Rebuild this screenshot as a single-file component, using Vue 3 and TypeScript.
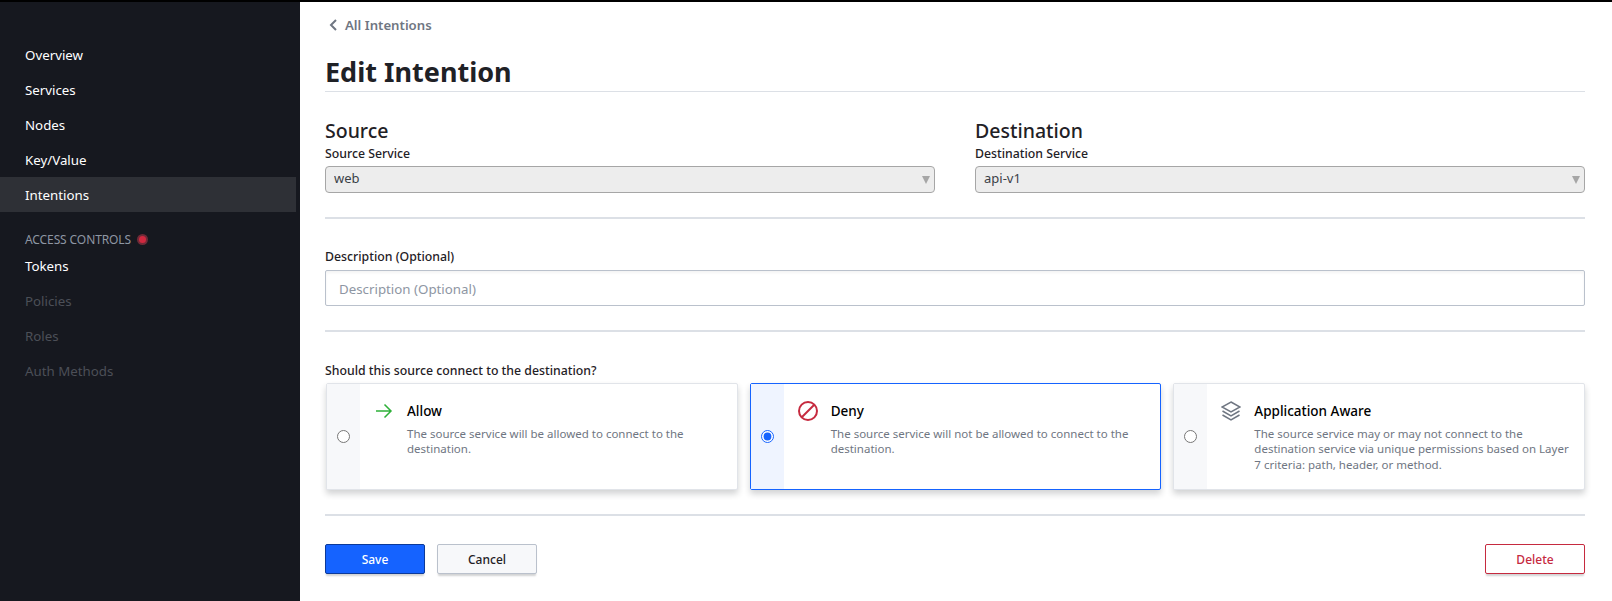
<script setup lang="ts">
const navTop = ["Overview", "Services", "Nodes", "Key/Value", "Intentions"];
const navAccess = [
  { label: "Tokens", off: false },
  { label: "Policies", off: true },
  { label: "Roles", off: true },
  { label: "Auth Methods", off: true },
];

const options = [
  {
    id: "allow",
    title: "Allow",
    text: "The source service will be allowed to connect to the destination.",
  },
  {
    id: "deny",
    title: "Deny",
    text: "The source service will not be allowed to connect to the destination.",
  },
  {
    id: "aware",
    title: "Application Aware",
    text: "The source service may or may not connect to the destination service via unique permissions based on Layer 7 criteria: path, header, or method.",
  },
];
</script>

<template>
  <div class="page">
    <nav class="side">
      <ul class="nav-list first">
        <li v-for="item in navTop" :key="item" :class="{ active: item === 'Intentions' }">{{ item }}</li>
      </ul>
      <div class="nav-title">ACCESS CONTROLS <span class="dot"></span></div>
      <ul class="nav-list">
        <li v-for="item in navAccess" :key="item.label" :class="{ off: item.off }">{{ item.label }}</li>
      </ul>
    </nav>

    <main class="main">
      <a class="crumb">
        <svg width="10" height="14" viewBox="0 0 10 14"><path d="M8 2 3 7l5 5" fill="none" stroke="#6f7682" stroke-width="2" /></svg>
        All Intentions
      </a>
      <h1>Edit Intention</h1>

      <section class="pair">
        <div>
          <h2>Source</h2>
          <label>Source Service</label>
          <div class="select">
            <select disabled><option>web</option></select>
            <span class="caret"></span>
          </div>
        </div>
        <div>
          <h2>Destination</h2>
          <label>Destination Service</label>
          <div class="select">
            <select disabled><option>api-v1</option></select>
            <span class="caret"></span>
          </div>
        </div>
      </section>

      <section class="desc">
        <label>Description (Optional)</label>
        <input type="text" placeholder="Description (Optional)" />
      </section>

      <section class="action">
        <label>Should this source connect to the destination?</label>
        <div class="cards">
          <div v-for="o in options" :key="o.id" class="card" :class="{ checked: o.id === 'deny' }">
            <div class="radio-col">
              <input type="radio" name="action" :checked="o.id === 'deny'" />
            </div>
            <div class="body">
              <div class="head">
                <svg v-if="o.id === 'allow'" width="20" height="20" viewBox="0 0 20 20">
                  <path d="M2 10h15M10.5 3.5 17 10l-6.500 6.500" fill="none" stroke="#2eb039" stroke-width="1.500" />
                </svg>
                <svg v-else-if="o.id === 'deny'" width="20" height="20" viewBox="0 0 20 20">
                  <circle cx="10" cy="10" r="9" fill="none" stroke="#c62a3f" stroke-width="2" />
                  <path d="M16 4 4 16" stroke="#c62a3f" stroke-width="2" />
                </svg>
                <svg v-else width="20" height="20" viewBox="0 0 20 20" fill="none" stroke="#6f7682" stroke-width="1.500">
                  <path d="M10 1 19 6l-9 5-9-5z" />
                  <path d="m1.500 10 8.500 4.800L18.500 10" />
                  <path d="m1.500 14 8.500 4.800L18.500 14" />
                </svg>
                <strong>{{ o.title }}</strong>
              </div>
              <p>{{ o.text }}</p>
            </div>
          </div>
        </div>
      </section>

      <footer class="buttons">
        <button class="btn save">Save</button>
        <button class="btn cancel">Cancel</button>
        <button class="btn delete">Delete</button>
      </footer>
    </main>
  </div>
</template>

<style>
html,
body {
  margin: 0;
  background: #fff;
}
</style>

<style scoped>
.page {
  display: flex;
  height: 599px;
  border-top: 2px solid #000;
  font-family: "Noto Sans", "Open Sans", sans-serif;
  overflow: hidden;
}

.side {
  width: 300px;
  flex: none;
  background: #16181f;
  padding-top: 35px;
  box-sizing: border-box;
}

.nav-list {
  list-style: none;
  margin: 0;
  padding: 0;
  font-size: 13.300px;
  color: #fff;
}

.nav-list li {
  height: 35px;
  line-height: 35px;
  padding-left: 25px;
}

.nav-list.first li {
  line-height: 37px;
}

.nav-list li.active {
  background: #2e3036;
  margin-right: 4px;
}

.nav-title {
  display: flex;
  align-items: center;
  gap: 8px;
  margin-top: 17px;
  padding-left: 25px;
  height: 20px;
  font-size: 12px;
  letter-spacing: -0.100px;
  color: #8e96a3;
}

.nav-list li.off {
  color: #4c4f57;
}

.dot {
  width: 7px;
  height: 7px;
  border-radius: 50%;
  background: #d0283f;
  box-shadow: 0 0 0 2px #6e2a37;
}

.main {
  flex: 1;
  min-width: 0;
  padding: 0 27px 0 25px;
}

.crumb {
  display: flex;
  align-items: center;
  gap: 7px;
  height: 46px;
  font-size: 13.200px;
  font-weight: 600;
  color: #6f7682;
  margin-left: 3px;
}

h1 {
  margin: 0;
  height: 43px;
  line-height: 47px;
  font-size: 27px;
  font-weight: 700;
  color: #1f2126;
  border-bottom: 1px solid #dce0e6;
}

.pair {
  display: grid;
  grid-template-columns: 1fr 1fr;
  column-gap: 40px;
  padding-top: 26px;
  padding-bottom: 24px;
  border-bottom: 2px solid #dce0e6;
}

h2 {
  margin: 0;
  height: 26px;
  line-height: 26px;
  font-size: 19.500px;
  font-weight: 500;
  color: #1f2126;
}

label {
  display: block;
  font-size: 12.300px;
  font-weight: 500;
  line-height: 20px;
  color: #1f2126;
}

.select {
  position: relative;
  margin-top: 2px;
}

select {
  display: block;
  width: 100%;
  height: 27px;
  padding: 0 8px 3px;
  appearance: none;
  font: inherit;
  font-size: 13px;
  color: #3b3f47;
  opacity: 1;
  background: #ededed;
  border: 1px solid #a6a6a6;
  border-radius: 4px;
}

.caret {
  position: absolute;
  right: 5px;
  top: 10px;
  border-left: 4px solid transparent;
  border-right: 4px solid transparent;
  border-top: 8px solid #a6a6a6;
}

.desc {
  padding-top: 28px;
  padding-bottom: 24px;
  border-bottom: 2px solid #dce0e6;
}

.desc input {
  display: block;
  box-sizing: border-box;
  width: 100%;
  height: 36px;
  margin-top: 3px;
  padding: 2px 13px 0;
  font: inherit;
  font-size: 13.300px;
  border: 1px solid #bac1cc;
  border-radius: 2px;
  box-shadow: inset 0 2px 3px rgba(31, 33, 38, 0.05);
  outline: none;
}

.desc input::placeholder {
  color: #8e96a3;
}

.action {
  padding-top: 29px;
  padding-bottom: 24px;
  border-bottom: 2px solid #dce0e6;
}

.cards {
  display: grid;
  grid-template-columns: repeat(3, 1fr);
  gap: 12px;
  margin-top: 2px;
  padding-left: 1px;
}

.card {
  display: flex;
  height: 107px;
  box-sizing: border-box;
  border: 1px solid #e1e4e9;
  border-radius: 2px;
  background: #fff;
  box-shadow: 0 4px 6px rgba(31, 33, 38, 0.2);
}

.card.checked {
  border-color: #1563ff;
}

.radio-col {
  display: flex;
  align-items: center;
  justify-content: center;
  flex: none;
  width: 33px;
  background: #f7f8fa;
}

.checked .radio-col {
  background: #eff4ff;
}

.radio-col input {
  margin: 0;
  accent-color: #1563ff;
}

.body {
  padding: 16px 14px 0 14px;
  min-width: 0;
}

.head {
  display: flex;
  align-items: center;
  gap: 13px;
  height: 22px;
}

strong {
  font-size: 13.500px;
  font-weight: 500;
  color: #000;
}

p {
  margin: 4px 0 0 33px;
  font-size: 11.500px;
  line-height: 15.300px;
  color: #6f7682;
}

.buttons {
  display: flex;
  gap: 12px;
  padding-top: 28px;
}

.btn {
  width: 100px;
  height: 30px;
  box-sizing: border-box;
  padding: 0;
  font: inherit;
  font-size: 12px;
  font-weight: 500;
  border-radius: 2px;
  border: 1px solid;
  box-shadow: 0 3px 2px -1px rgba(31, 33, 38, 0.2);
}

.save {
  background: #1563ff;
  border-color: #0c3a99;
  color: #fff;
}

.cancel {
  background: #f7f8fa;
  border-color: #bac1cc;
  color: #1f2126;
}

.delete {
  margin-left: auto;
  background: #fff;
  border-color: #c62a3f;
  color: #c62a3f;
}
</style>
